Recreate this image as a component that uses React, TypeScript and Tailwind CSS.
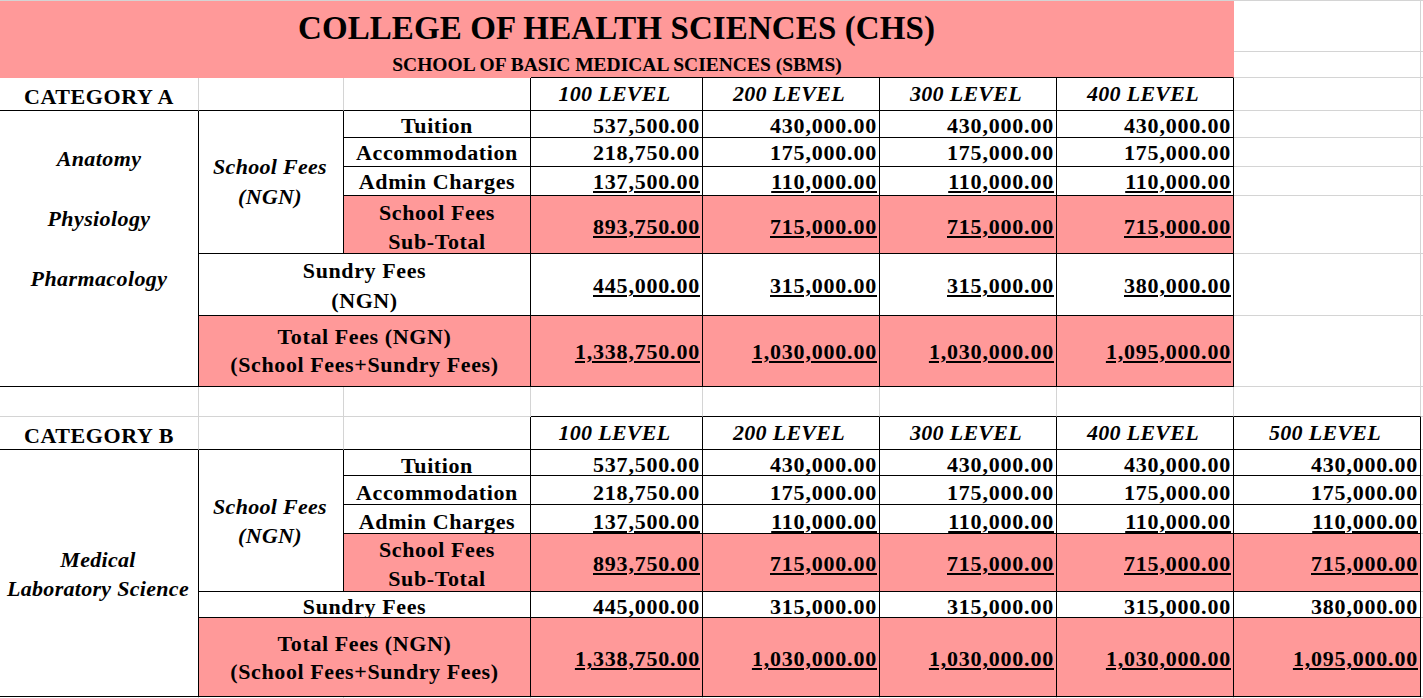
import React from "react";

const KK = "border-r border-b border-r-black border-b-black";
const GG = "border-r border-b border-r-[#d4d4d4] border-b-[#d4d4d4]";
const GK = "border-r border-b border-r-[#d4d4d4] border-b-black";
const PP = "border-r border-b border-r-[#ff9999] border-b-[#ff9999]";
const PK = "border-r border-b border-r-[#ff9999] border-b-black";
const IG = "border-b border-b-[#d4d4d4]";
const PINK = "bg-[#ff9999]";

const RS = [
  "",
  "row-start-1",
  "row-start-2",
  "row-start-3",
  "row-start-4",
  "row-start-5",
  "row-start-6",
  "row-start-7",
  "row-start-8",
  "row-start-9",
  "row-start-10",
  "row-start-11",
  "row-start-12",
  "row-start-13",
  "row-start-14",
  "row-start-15",
  "row-start-16",
  "row-start-17",
  "row-start-18",
];
const CS = [
  "",
  "col-start-1",
  "col-start-2",
  "col-start-3",
  "col-start-4",
  "col-start-5",
  "col-start-6",
  "col-start-7",
  "col-start-8",
  "col-start-9",
];

const PT: Record<number, string> = {
  4: "pt-[3px]",
  5: "pt-[1px]",
  6: "pt-[1px]",
  7: "pt-[4px]",
  8: "pt-[3px]",
  9: "pt-[1px]",
  12: "pt-[5px]",
  13: "pt-[5px]",
  14: "pt-[5px]",
  15: "pt-[2px]",
  16: "pt-[4px]",
  17: "pt-[4px]",
};

const UL = "underline decoration-2 underline-offset-[2px]";

function Num({
  col,
  row,
  v,
  u,
  pink,
}: {
  col: number;
  row: number;
  v: string;
  u?: boolean;
  pink?: boolean;
}) {
  return (
    <div
      className={`${CS[col]} ${RS[row]} ${KK} ${pink ? PINK : ""} flex items-center justify-end pr-[2px] ${PT[row] ?? ""}`}
    >
      <span className={`font-bold text-[22px] leading-none tracking-[0.8px] whitespace-nowrap ${u ? UL : ""}`}>{v}</span>
    </div>
  );
}

function Label({ row, text, pink }: { row: number; text: React.ReactNode; pink?: boolean }) {
  return (
    <div
      className={`${CS[3]} ${RS[row]} ${KK} ${pink ? PINK : ""} flex items-center justify-center text-center ${PT[row] ?? ""}`}
    >
      <span className="font-bold text-[22px] leading-[29px] tracking-[0.6px]">{text}</span>
    </div>
  );
}

function Level({ col, row, text }: { col: number; row: number; text: string }) {
  return (
    <div className={`${CS[col]} ${RS[row]} ${KK} flex items-center justify-center pr-[4px]`}>
      <span className="font-bold italic text-[22px] leading-none tracking-[0.3px] whitespace-nowrap">{text}</span>
    </div>
  );
}

function Blank({ col, row, b }: { col: number; row: number; b: string }) {
  return <div className={`${CS[col]} ${RS[row]} ${b}`} />;
}

function ValueRow({
  row,
  vals,
  u,
  pink,
}: {
  row: number;
  vals: string[];
  u?: boolean;
  pink?: boolean;
}) {
  return (
    <>
      {vals.map((v, i) => (
        <Num key={i} col={4 + i} row={row} v={v} u={u} pink={pink} />
      ))}
    </>
  );
}

export default function App() {
  const levelsA = ["100 LEVEL", "200 LEVEL", "300 LEVEL", "400 LEVEL"];
  const levelsB = ["100 LEVEL", "200 LEVEL", "300 LEVEL", "400 LEVEL", "500 LEVEL"];

  const rightFillerRows = [1, 2, 3, 4, 5, 6, 7, 8, 9, 10, 11, 12, 13, 14, 15, 16, 17, 18];

  return (
    <div className="h-[698px] w-full overflow-hidden bg-white text-black font-['Liberation_Serif','Times_New_Roman',serif]">
      <div className="h-px bg-[#d4d4d4]" />
      <div className="grid grid-cols-[199px_145px_187px_172px_177px_177px_177px_187px_1fr] grid-rows-[51px_26px_33px_27px_29px_29px_58px_62px_71px_30px_33px_26px_29px_29px_58px_26px_79px_30px]">
        {/* Title */}
        <div className={`col-start-1 col-span-7 row-start-1 ${PP} ${PINK} flex items-center justify-center pt-[5px]`}>
          <span className="font-bold text-[33px] leading-none tracking-[0.1px] whitespace-nowrap">COLLEGE OF HEALTH SCIENCES (CHS)</span>
        </div>
        <Blank col={8} row={1} b={GG} />

        {/* Subtitle */}
        <div className={`col-start-1 col-span-3 row-start-2 ${PP} ${PINK}`} />
        <div className={`col-start-4 col-span-4 row-start-2 ${PK} ${PINK}`} />
        <div className="col-start-1 col-span-7 row-start-2 relative z-10 flex items-center justify-center">
          <span className="font-bold text-[19.5px] leading-none whitespace-nowrap">SCHOOL OF BASIC MEDICAL SCIENCES (SBMS)</span>
        </div>
        <Blank col={8} row={2} b={GG} />

        {/* Category A header */}
        <div className={`col-start-1 row-start-3 ${GK} flex items-center justify-center pt-[6px]`}>
          <span className="font-bold text-[22px] leading-none tracking-[0.6px] whitespace-nowrap">CATEGORY A</span>
        </div>
        <Blank col={2} row={3} b={GK} />
        <Blank col={3} row={3} b={KK} />
        {levelsA.map((l, i) => (
          <Level key={l} col={4 + i} row={3} text={l} />
        ))}
        <Blank col={8} row={3} b={GG} />

        {/* Category A body */}
        <div className={`col-start-1 row-start-4 row-span-6 ${KK} flex flex-col items-center pt-[18px]`}>
          <span className="font-bold italic text-[22px] leading-[60px] tracking-[0.4px]">Anatomy</span>
          <span className="font-bold italic text-[22px] leading-[60px] tracking-[0.4px]">Physiology</span>
          <span className="font-bold italic text-[22px] leading-[60px] tracking-[0.4px]">Pharmacology</span>
        </div>
        <div className={`col-start-2 row-start-4 row-span-4 ${KK} flex items-center justify-center text-center pr-[2px]`}>
          <span className="font-bold italic text-[22px] leading-[30px] tracking-[0.3px]">
            School Fees
            <br />
            (NGN)
          </span>
        </div>
        <Label row={4} text="Tuition" />
        <Label row={5} text="Accommodation" />
        <Label row={6} text="Admin Charges" />
        <Label
          row={7}
          pink
          text={
            <>
              School Fees
              <br />
              Sub-Total
            </>
          }
        />
        <ValueRow row={4} vals={["537,500.00", "430,000.00", "430,000.00", "430,000.00"]} />
        <ValueRow row={5} vals={["218,750.00", "175,000.00", "175,000.00", "175,000.00"]} />
        <ValueRow row={6} u vals={["137,500.00", "110,000.00", "110,000.00", "110,000.00"]} />
        <ValueRow row={7} u pink vals={["893,750.00", "715,000.00", "715,000.00", "715,000.00"]} />

        <div className={`col-start-2 col-span-2 row-start-8 ${KK} flex items-center justify-center text-center pt-[2px]`}>
          <span className="font-bold text-[22px] leading-[29.5px] tracking-[0.6px]">
            Sundry Fees
            <br />
            (NGN)
          </span>
        </div>
        <ValueRow row={8} u vals={["445,000.00", "315,000.00", "315,000.00", "380,000.00"]} />

        <div className={`col-start-2 col-span-2 row-start-9 ${KK} ${PINK} flex items-center justify-center text-center`}>
          <span className="font-bold text-[22px] leading-[28.5px] tracking-[0.6px] whitespace-nowrap">
            Total Fees (NGN)
            <br />
            (School Fees+Sundry Fees)
          </span>
        </div>
        <ValueRow row={9} u pink vals={["1,338,750.00", "1,030,000.00", "1,030,000.00", "1,095,000.00"]} />

        {[4, 5, 6, 7, 8, 9].map((r) => (
          <Blank key={r} col={8} row={r} b={GG} />
        ))}

        {/* Spacer row 10 */}
        <Blank col={1} row={10} b={GG} />
        <Blank col={2} row={10} b={GG} />
        <Blank col={3} row={10} b={GG} />
        <Blank col={4} row={10} b={GK} />
        <Blank col={5} row={10} b={GK} />
        <Blank col={6} row={10} b={GK} />
        <Blank col={7} row={10} b={GK} />
        <Blank col={8} row={10} b={GK} />

        {/* Category B header */}
        <div className={`col-start-1 row-start-11 ${GK} flex items-center justify-center pt-[5px]`}>
          <span className="font-bold text-[22px] leading-none tracking-[0.6px] whitespace-nowrap">CATEGORY B</span>
        </div>
        <Blank col={2} row={11} b={GK} />
        <Blank col={3} row={11} b={KK} />
        {levelsB.map((l, i) => (
          <Level key={l} col={4 + i} row={11} text={l} />
        ))}

        {/* Category B body */}
        <div className={`col-start-1 row-start-12 row-span-6 ${KK} flex items-center justify-center text-center pt-[1px] pr-[2px]`}>
          <span className="font-bold italic text-[22px] leading-[29px] tracking-[0.3px] whitespace-nowrap">
            Medical
            <br />
            Laboratory Science
          </span>
        </div>
        <div className={`col-start-2 row-start-12 row-span-4 ${KK} flex items-center justify-center text-center pr-[2px]`}>
          <span className="font-bold italic text-[22px] leading-[29px] tracking-[0.3px]">
            School Fees
            <br />
            (NGN)
          </span>
        </div>
        <Label row={12} text="Tuition" />
        <Label row={13} text="Accommodation" />
        <Label row={14} text="Admin Charges" />
        <Label
          row={15}
          pink
          text={
            <>
              School Fees
              <br />
              Sub-Total
            </>
          }
        />
        <ValueRow row={12} vals={["537,500.00", "430,000.00", "430,000.00", "430,000.00", "430,000.00"]} />
        <ValueRow row={13} vals={["218,750.00", "175,000.00", "175,000.00", "175,000.00", "175,000.00"]} />
        <ValueRow row={14} u vals={["137,500.00", "110,000.00", "110,000.00", "110,000.00", "110,000.00"]} />
        <ValueRow row={15} u pink vals={["893,750.00", "715,000.00", "715,000.00", "715,000.00", "715,000.00"]} />

        <div className={`col-start-2 col-span-2 row-start-16 ${KK} flex items-center justify-center pt-[4px]`}>
          <span className="font-bold text-[22px] leading-none tracking-[0.6px] whitespace-nowrap">Sundry Fees</span>
        </div>
        <ValueRow row={16} vals={["445,000.00", "315,000.00", "315,000.00", "315,000.00", "380,000.00"]} />

        <div className={`col-start-2 col-span-2 row-start-17 ${KK} ${PINK} flex items-center justify-center text-center pt-[2px]`}>
          <span className="font-bold text-[22px] leading-[28px] tracking-[0.6px] whitespace-nowrap">
            Total Fees (NGN)
            <br />
            (School Fees+Sundry Fees)
          </span>
        </div>
        <ValueRow row={17} u pink vals={["1,338,750.00", "1,030,000.00", "1,030,000.00", "1,030,000.00", "1,095,000.00"]} />

        {/* Row 18 filler */}
        {[1, 2, 3, 4, 5, 6, 7, 8].map((c) => (
          <Blank key={c} col={c} row={18} b={GG} />
        ))}

        {/* Rightmost sliver column */}
        {rightFillerRows.map((r) => (
          <Blank key={r} col={9} row={r} b={IG} />
        ))}
      </div>
    </div>
  );
}
